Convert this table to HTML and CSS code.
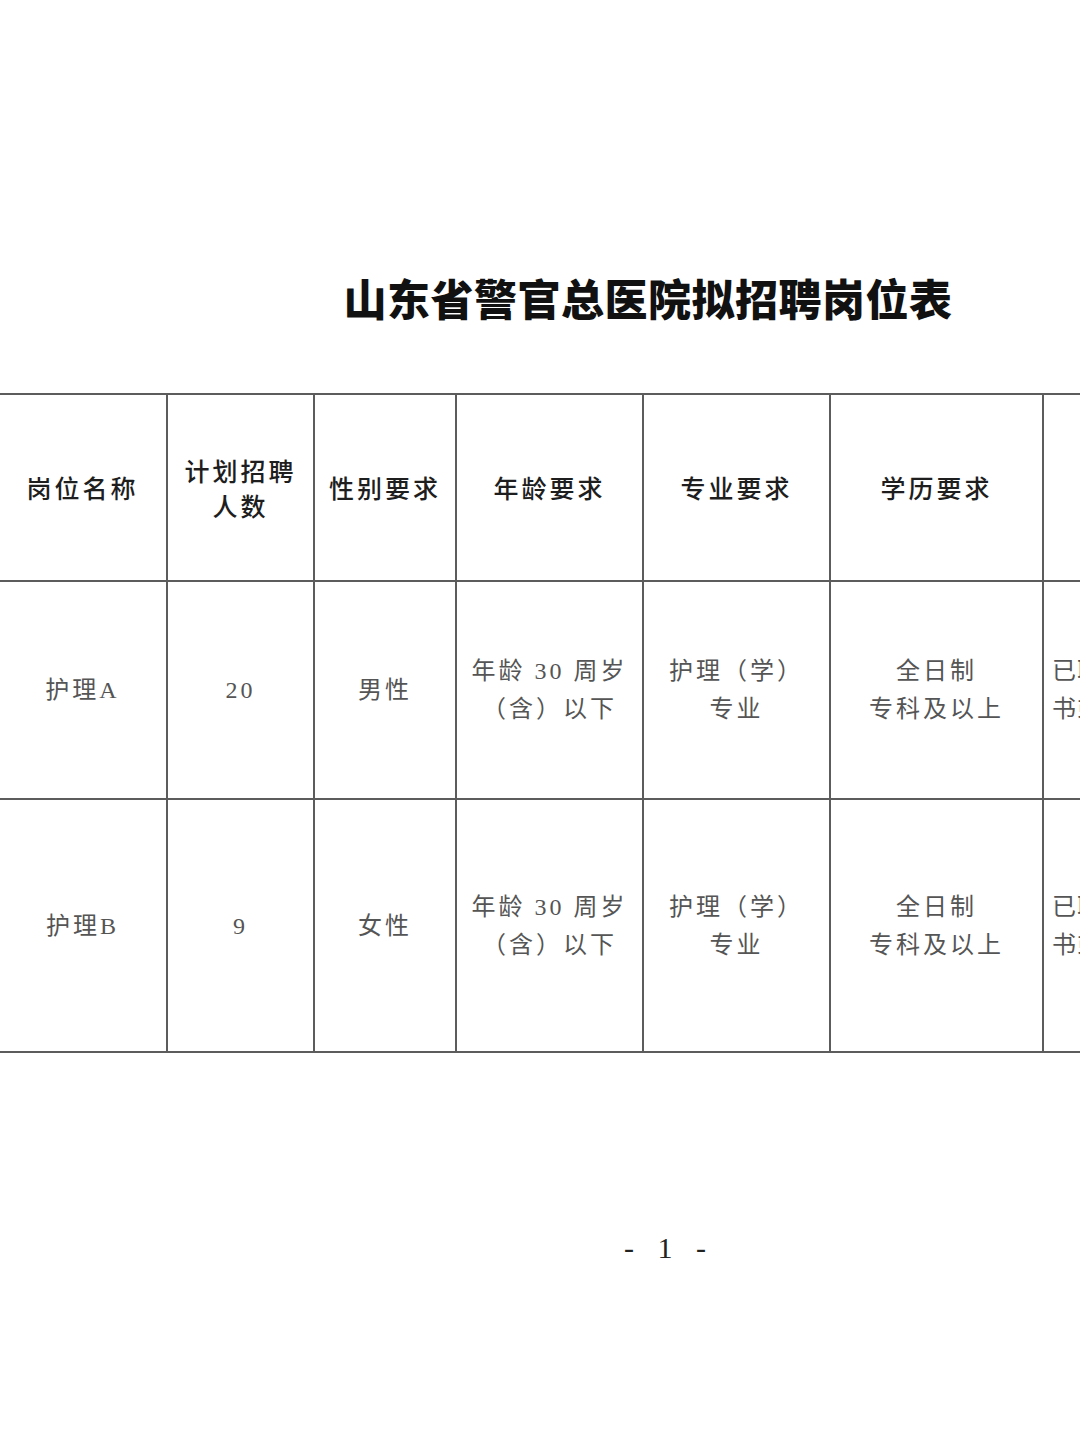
FILE: index.html
```html
<!DOCTYPE html>
<html lang="zh-CN">
<head>
<meta charset="utf-8">
<title>山东省警官总医院拟招聘岗位表</title>
<link rel="stylesheet" href="styles.css">
</head>
<body>
<div class="page">
  <h1 class="title">山东省警官总医院拟招聘岗位表</h1>
  <div class="table-wrap">
    <table class="jobs">
      <colgroup>
        <col class="c1"><col class="c2"><col class="c3"><col class="c4"><col class="c5"><col class="c6"><col class="c7">
      </colgroup>
      <thead>
        <tr class="head-row">
          <th>岗位名称</th>
          <th>计划招聘<br>人数</th>
          <th>性别要求</th>
          <th>年龄要求</th>
          <th>专业要求</th>
          <th>学历要求</th>
          <th class="off">其他要求</th>
        </tr>
      </thead>
      <tbody>
        <tr class="row-a">
          <td>护理A</td>
          <td>20</td>
          <td>男性</td>
          <td>年龄 30 周岁<br>（含）以下</td>
          <td>护理（学）<br>专业</td>
          <td>全日制<br>专科及以上</td>
          <td class="cut">已取得护士执业<br>书或护士资格证</td>
        </tr>
        <tr class="row-b">
          <td>护理B</td>
          <td>9</td>
          <td>女性</td>
          <td>年龄 30 周岁<br>（含）以下</td>
          <td>护理（学）<br>专业</td>
          <td>全日制<br>专科及以上</td>
          <td class="cut">已取得护士执业<br>书或护士资格证</td>
        </tr>
      </tbody>
    </table>
  </div>
  <div class="page-num">- 1 -</div>
</div>
</body>
</html>
```

FILE: styles.css
```css
html, body {
  margin: 0;
  padding: 0;
  background: #ffffff;
}

body {
  font-family: "Liberation Serif", "Noto Sans CJK SC", serif;
  color: #333;
}

.page {
  width: 1080px;
  height: 1440px;
  overflow: hidden;
  padding-top: 272px;
  box-sizing: border-box;
}

.title {
  margin: 0;
  padding-left: 216px;
  text-align: center;
  font-family: "Noto Sans CJK SC", sans-serif;
  font-weight: 900;
  font-size: 43px;
  line-height: 50px;
  color: #111;
  letter-spacing: 0.5px;
}

.table-wrap {
  margin-top: 71px;
  width: 1080px;
  overflow: hidden;
}

.jobs {
  border-collapse: collapse;
  table-layout: fixed;
  width: 1280px;
  margin-left: -3px;
}

.c1 { width: 169px; }
.c2 { width: 147px; }
.c3 { width: 142px; }
.c4 { width: 187px; }
.c5 { width: 187px; }
.c6 { width: 213px; }
.c7 { width: 235px; }

.jobs th,
.jobs td {
  border: 2px solid #5c5c5c;
  text-align: center;
  vertical-align: middle;
  padding: 0;
  white-space: nowrap;
  overflow: hidden;
}

.jobs th {
  font-family: "Noto Sans CJK SC", sans-serif;
  font-weight: 500;
  font-size: 25px;
  line-height: 35px;
  letter-spacing: 3px;
  color: #1e1e1e;
}

.jobs th.off {
  text-align: right;
  padding-right: 20px;
}

.jobs td {
  font-size: 24px;
  line-height: 38px;
  letter-spacing: 3px;
  color: #555;
  font-weight: 400;
}

.head-row { height: 187px; }
.row-a { height: 218px; }
.row-b { height: 253px; }

.jobs td.cut {
  text-align: left;
  padding-left: 8px;
  letter-spacing: 1px;
}

.page-num {
  margin-top: 175px;
  padding-left: 258px;
  text-align: center;
  font-size: 30px;
  line-height: 40px;
  color: #222;
  letter-spacing: 8px;
}
```
